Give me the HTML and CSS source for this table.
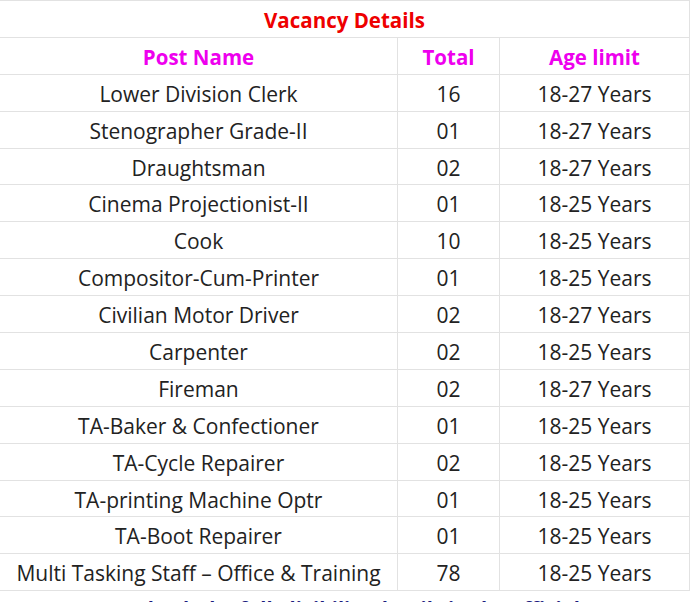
FILE: index.html
```html
<!DOCTYPE html>
<html>
<head>
<meta charset="utf-8">
<link rel="stylesheet" href="styles.css">
</head>
<body>
<table class="vacancy">
  <colgroup><col class="c1"><col class="c2"><col class="c3"></colgroup>
  <tr><th colspan="3" class="title">Vacancy Details</th></tr>
  <tr class="head"><th>Post Name</th><th>Total</th><th>Age limit</th></tr>
  <tr><td>Lower Division Clerk</td><td>16</td><td>18-27 Years</td></tr>
  <tr><td>Stenographer Grade-II</td><td>01</td><td>18-27 Years</td></tr>
  <tr><td>Draughtsman</td><td>02</td><td>18-27 Years</td></tr>
  <tr><td>Cinema Projectionist-II</td><td>01</td><td>18-25 Years</td></tr>
  <tr><td>Cook</td><td>10</td><td>18-25 Years</td></tr>
  <tr><td>Compositor-Cum-Printer</td><td>01</td><td>18-25 Years</td></tr>
  <tr><td>Civilian Motor Driver</td><td>02</td><td>18-27 Years</td></tr>
  <tr><td>Carpenter</td><td>02</td><td>18-25 Years</td></tr>
  <tr><td>Fireman</td><td>02</td><td>18-27 Years</td></tr>
  <tr><td>TA-Baker &amp; Confectioner</td><td>01</td><td>18-25 Years</td></tr>
  <tr><td>TA-Cycle Repairer</td><td>02</td><td>18-25 Years</td></tr>
  <tr><td>TA-printing Machine Optr</td><td>01</td><td>18-25 Years</td></tr>
  <tr><td>TA-Boot Repairer</td><td>01</td><td>18-25 Years</td></tr>
  <tr><td>Multi Tasking Staff – Office &amp; Training</td><td>78</td><td>18-25 Years</td></tr>
</table>
<p class="note">Check the full eligibility details in the official notification before you apply online</p>
</body>
</html>
```
FILE: styles.css
```css
html, body {
  margin: 0;
  padding: 0;
  background: #fff;
  overflow: hidden;
}
body {
  font-family: "Open Sans", "Noto Sans", sans-serif;
  color: #222;
}
.vacancy {
  border-collapse: collapse;
  width: 690px;
  margin-left: -1px;
  table-layout: fixed;
}
.vacancy .c1 { width: 398px; }
.vacancy .c2 { width: 102px; }
.vacancy .c3 { width: 190px; }
.vacancy th, .vacancy td {
  border: 1px solid #e2e2e2;
  text-align: center;
  font-size: 21px;
  line-height: 27px;
  height: 27px;
  padding: 6px 0 2.9px;
  white-space: nowrap;
  overflow: hidden;
}
.vacancy th {
  font-size: 20.5px;
  font-weight: 700;
}
.vacancy .title {
  color: #ee0000;
}
.vacancy .head th {
  color: #ee00ee;
}
.vacancy td {
  font-weight: 400;
}
.note {
  margin: 4px 0 0;
  padding: 0 0 0 135px;
  text-align: left;
  font-size: 20px;
  line-height: 28px;
  font-weight: 700;
  color: #1c1c80;
}
```
